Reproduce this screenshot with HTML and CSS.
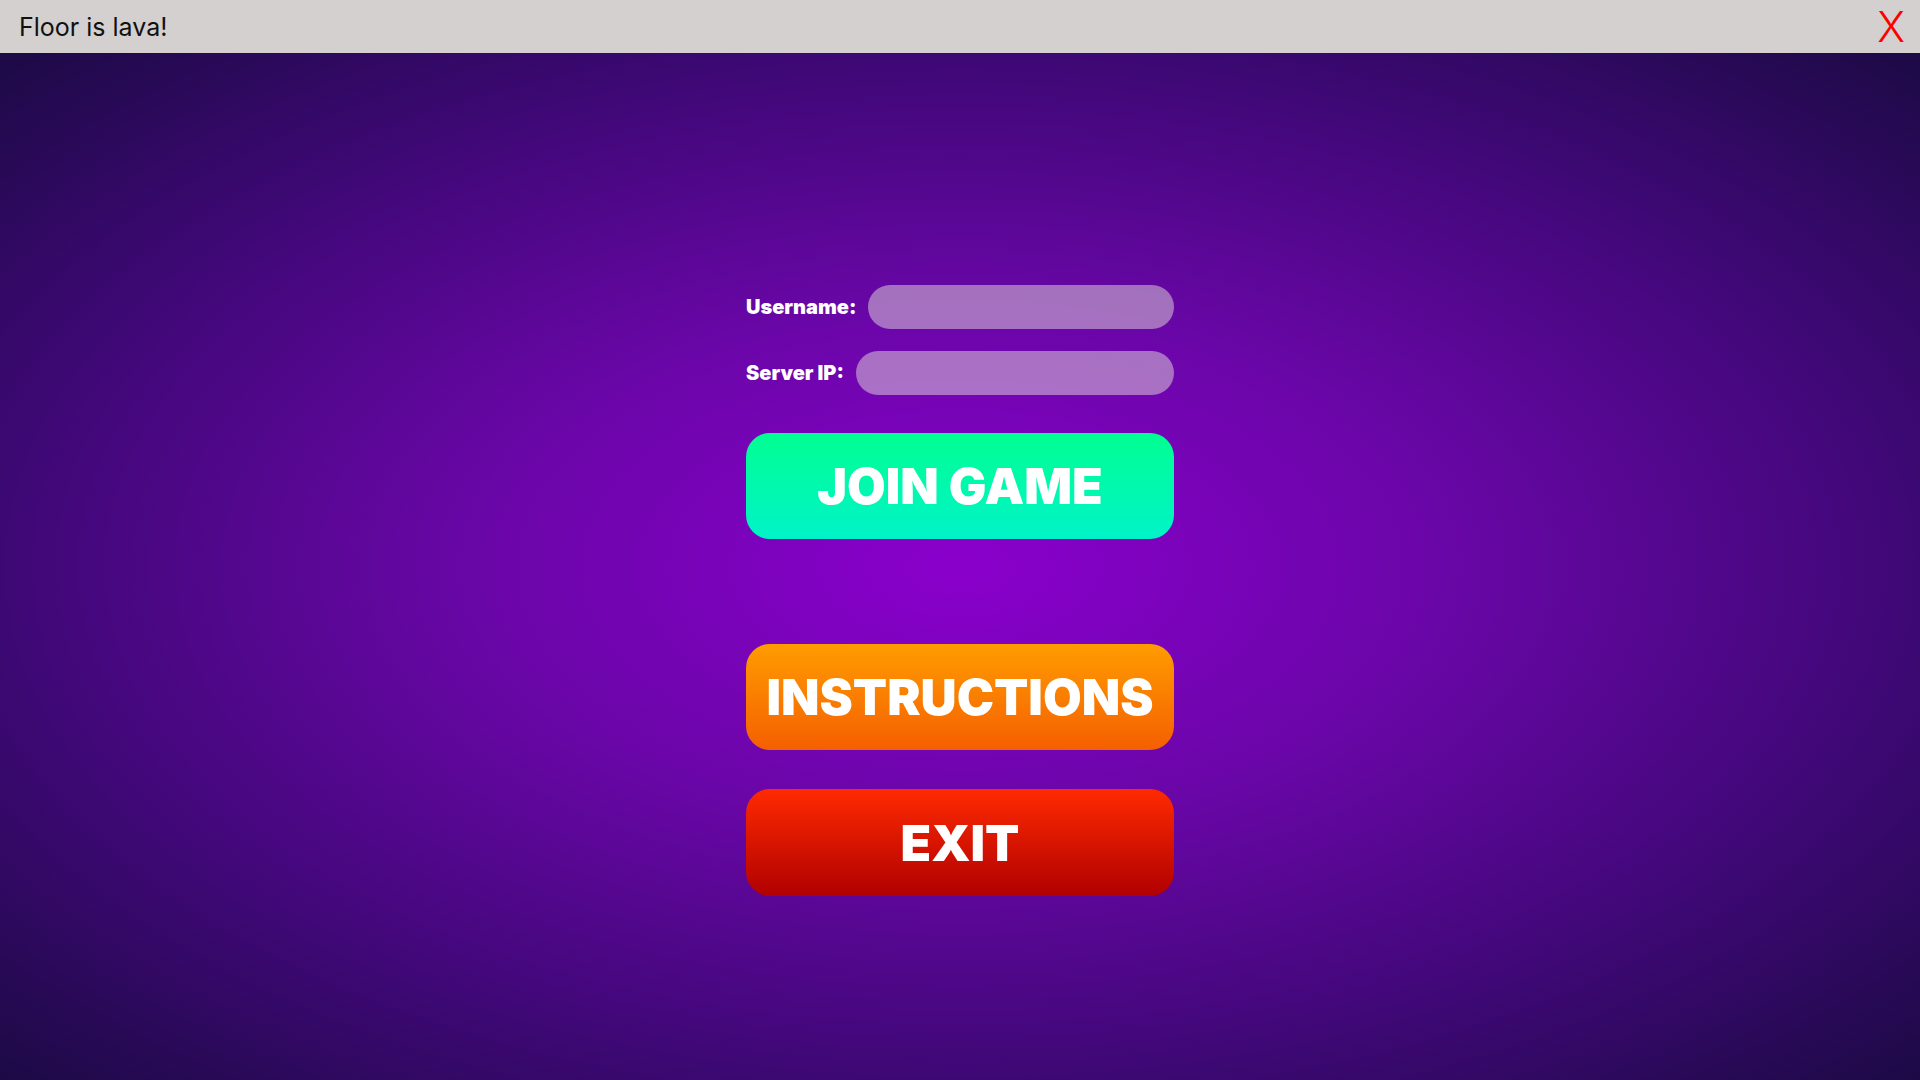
FILE: index.html
```html
<!DOCTYPE html>
<html>
<head>
<meta charset="utf-8">
<title>Floor is lava!</title>
<link rel="stylesheet" href="styles.css">
</head>
<body>
<div class="app">
  <header class="titlebar">
    <span class="title">Floor is lava!</span>
    <span class="close">X</span>
  </header>
  <main class="stage">
    <div class="menu">
      <div class="field">
        <label class="label">Username:</label>
        <div class="input"></div>
      </div>
      <div class="field">
        <label class="label">Server IP:</label>
        <div class="input"></div>
      </div>
      <div class="btn btn-join">JOIN GAME</div>
      <div class="btn btn-instr">INSTRUCTIONS</div>
      <div class="btn btn-exit">EXIT</div>
    </div>
  </main>
</div>
</body>
</html>
```
FILE: styles.css
```css
html, body {
  margin: 0;
  padding: 0;
  height: 100%;
}
body {
  font-family: Inter, "Noto Sans", sans-serif;
}
.app {
  display: flex;
  flex-direction: column;
  height: 1080px;
  width: 1920px;
}
.titlebar {
  height: 53px;
  flex: none;
  background: #d4d0cf;
  display: flex;
  align-items: center;
  justify-content: space-between;
  padding: 0 15px 0 19px;
}
.title {
  font-size: 25px;
  color: #111;
}
.close {
  font-size: 42px;
  font-weight: 300;
  color: #ff0000;
  line-height: 1;
}
.stage {
  flex: 1;
  background: radial-gradient(ellipse farthest-corner at 50% 50%, #8a00cc 0%, #6a06a8 35%, #3e0875 70%, #1c0a45 100%);
  display: flex;
  justify-content: center;
  padding-top: 232px;
  box-sizing: border-box;
}
.menu {
  width: 428px;
  display: flex;
  flex-direction: column;
}
.field {
  display: flex;
  align-items: center;
  gap: 12px;
  height: 44px;
}
.field + .field {
  margin-top: 22px;
}
.label {
  color: #fff;
  font-weight: 900;
  font-size: 20px;
  white-space: nowrap;
}
.input {
  flex: 1;
  height: 44px;
  border-radius: 22px;
  background: rgba(240, 245, 225, 0.45);
}
.btn {
  height: 106px;
  border-radius: 24px;
  display: flex;
  align-items: center;
  justify-content: center;
  color: #fff;
  font-weight: 900;
  font-size: 50px;
}
.btn-join {
  margin-top: 38px;
  background: linear-gradient(to bottom, #00ff92, #00f3c8);
}
.btn-instr {
  margin-top: 105px;
  background: linear-gradient(to bottom, #ff9c00, #f55f00);
}
.btn-exit {
  margin-top: 39px;
  height: 107px;
  background: linear-gradient(to bottom, #ff2a00, #b00000);
}
```
